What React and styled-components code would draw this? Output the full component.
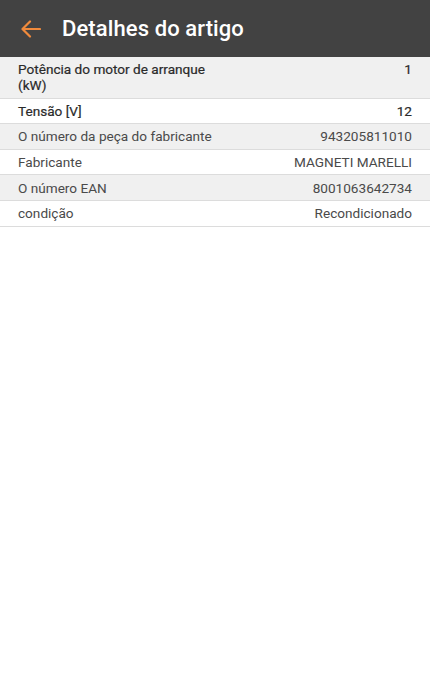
import React from "react";
import styled, { createGlobalStyle } from "styled-components";

const Global = createGlobalStyle`
  html, body { margin: 0; padding: 0; background: #ffffff; }
  body { font-family: Roboto, "Noto Sans", Arial, sans-serif; }
`;

const Page = styled.div`
  width: 430px;
  min-height: 700px;
  background: #ffffff;
`;

const Toolbar = styled.header`
  height: 57px;
  background: #424242;
  display: flex;
  align-items: center;
  padding-left: 20px;
  gap: 20px;
  box-sizing: border-box;
`;

const BackButton = styled.button`
  border: 0;
  background: transparent;
  padding: 0;
  width: 22px;
  height: 22px;
  display: flex;
  align-items: center;
  justify-content: center;
  cursor: pointer;
`;

const Title = styled.h1`
  margin: 0;
  color: #ffffff;
  font-size: 22px;
  font-weight: 500;
  letter-spacing: 0.1px;
`;

const List = styled.div`
  display: flex;
  flex-direction: column;
`;

const Row = styled.div`
  display: flex;
  justify-content: space-between;
  align-items: flex-start;
  padding: 4.3px 18px;
  background: ${(p) => (p.$shaded ? "#f0f0f0" : "#ffffff")};
  border-bottom: 1px solid #dcdcdc;
  font-size: 13.6px;
  line-height: 16px;
  color: ${(p) => (p.$bold ? "#2a2a2a" : "#4a4a4a")};
  font-weight: 400;
  -webkit-text-stroke: ${(p) => (p.$bold ? "0.2px #2a2a2a" : "0")};
`;

const Label = styled.span`
  flex: 0 1 54%;
`;

const Value = styled.span`
  text-align: right;
`;

const rows = [
  ["Potência do motor de arranque (kW)", "1", true],
  ["Tensão [V]", "12", true],
  ["O número da peça do fabricante", "943205811010", false],
  ["Fabricante", "MAGNETI MARELLI", false],
  ["O número EAN", "8001063642734", false],
  ["condição", "Recondicionado", false],
];

export default function App() {
  return (
    <Page>
      <Global />
      <Toolbar>
        <BackButton aria-label="Voltar">
          <svg width="20" height="18" viewBox="0 0 20 18" fill="none">
            <path
              d="M19 9H2M9 1.5L1.5 9L9 16.5"
              stroke="#f08a3c"
              strokeWidth="2.2"
              strokeLinecap="round"
              strokeLinejoin="round"
            />
          </svg>
        </BackButton>
        <Title>Detalhes do artigo</Title>
      </Toolbar>
      <List>
        {rows.map(([label, value, bold], i) => (
          <Row key={label} $shaded={i % 2 === 0} $bold={bold}>
            <Label>{label}</Label>
            <Value>{value}</Value>
          </Row>
        ))}
      </List>
    </Page>
  );
}
